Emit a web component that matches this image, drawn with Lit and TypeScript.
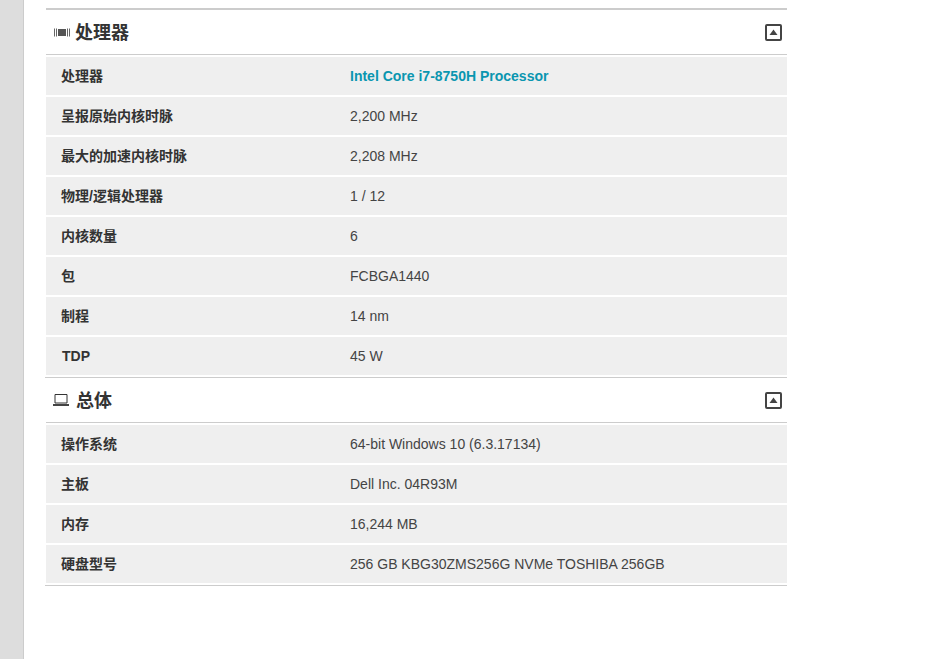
import { LitElement, html, css } from "lit";
import { customElement } from "lit/decorators.js";

const cpu: [string, string][] = [
  ["处理器", "Intel Core i7-8750H Processor"],
  ["呈报原始内核时脉", "2,200 MHz"],
  ["最大的加速内核时脉", "2,208 MHz"],
  ["物理/逻辑处理器", "1 / 12"],
  ["内核数量", "6"],
  ["包", "FCBGA1440"],
  ["制程", "14 nm"],
  ["TDP", "45 W"],
];
const gen: [string, string][] = [
  ["操作系统", "64-bit Windows 10 (6.3.17134)"],
  ["主板", "Dell Inc. 04R93M"],
  ["内存", "16,244 MB"],
  ["硬盘型号", "256 GB KBG30ZMS256G NVMe TOSHIBA 256GB"],
];

@customElement("app-root")
export class AppRoot extends LitElement {
  static styles = css`
    :host { display: flex; height: 659px; width: 936px; overflow: hidden; background: #fff;
      font-family: "Liberation Sans", "Noto Sans CJK SC", sans-serif; color: #333; }
    .side { width: 23px; background: #ddd; border-right: 1px solid #ccc; flex: none; }
    .main { width: 741px; margin-left: 22px; padding-top: 8px; }
    .head { height: 44px; border-top: 2px solid #ccc; border-bottom: 1px solid #ccc; display: flex; align-items: center; padding: 0 5px 0 8px; margin-bottom: 2px; }
    .head h2 { margin: 0 0 2px 5px; font-size: 18px; font-weight: bold; flex: 1; color: #333; }
    .head.two { border-top: 0; padding-left: 7px; }
    .head.two h2 { margin-left: 7px; }
    .rule { height: 1px; background: #ccc; margin-left: -1px; }
    .rows { display: flex; flex-direction: column; }
    .row { height: 38px; background: #efefef; margin-bottom: 2px; display: flex; align-items: center; font-size: 14px; }
    .k { width: 304px; padding-left: 15px; padding-bottom: 2px; box-sizing: border-box; font-weight: bold; color: #333; flex: none; }
    .k.latin { padding-left: 16px; padding-bottom: 0; }
    .v { color: #444; }
    .v.link { color: #0a96b0; font-weight: bold; }
    svg { display: block; flex: none; }
    .toggle { margin-top: 1px; }
  `;
  rows(list: [string, string][], link = false) {
    return html`<div class="rows">${list.map(([k, v], i) => html`<div class="row"><div class="k ${k === "TDP" ? "latin" : ""}">${k}</div><div class="v ${link && i === 0 ? "link" : ""}">${v}</div></div>`)}</div>`;
  }
  toggle() {
    return html`<svg class="toggle" width="17" height="17" viewBox="0 0 17 17"><rect x="1" y="1" width="15" height="15" rx="1" fill="none" stroke="#444" stroke-width="2"/><path d="M8.5 5.5 L12.5 11 L4.5 11 Z" fill="#444"/></svg>`;
  }
  render() {
    return html`<div class="side"></div><div class="main">
      <div class="head"><svg width="16" height="9" viewBox="0 0 16 9"><path d="M0.5 .5v8M2.5 .5v8M13.5 .5v8M15.5 .5v8" stroke="#666" fill="none"/><rect x="4" y="1" width="8" height="7" fill="#555"/></svg><h2>处理器</h2>${this.toggle()}</div>
      ${this.rows(cpu, true)}
      <div class="rule"></div>
      <div class="head two"><svg width="16" height="12" viewBox="0 0 16 12"><path d="M2 .5h12v8.5H2z" fill="none" stroke="#333"/><path d="M0 10h16v2H0z" fill="#444"/></svg><h2>总体</h2>${this.toggle()}</div>
      ${this.rows(gen)}
      <div class="rule"></div>
    </div>`;
  }
}
